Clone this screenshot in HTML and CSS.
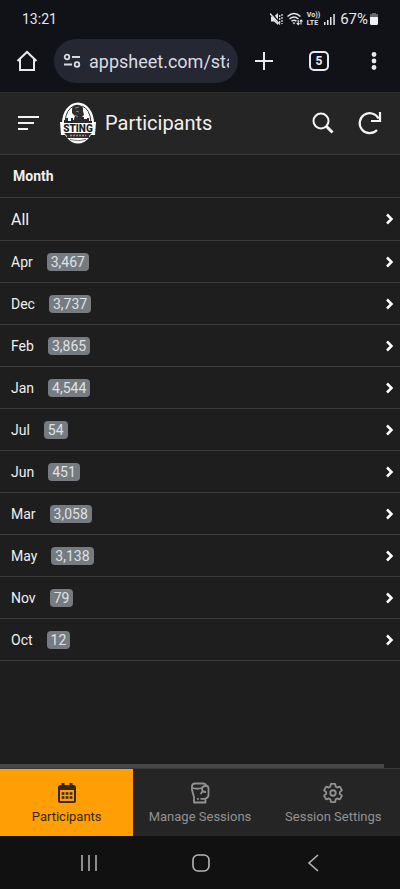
FILE: index.html
```html
<!DOCTYPE html>
<html lang="en">
<head>
    <meta charset="UTF-8">
    <meta name="viewport" content="width=device-width, initial-scale=1.0">
    <title>Participants</title>
    <link rel="stylesheet" href="styles.css">
</head>
<body>
    <div class="status-bar">
        <span class="clock">13:21</span>
        <div class="status-icons">
            <svg width="13" height="14" viewBox="0 0 13 14">
                <path d="M1 4.500h3L8 1v12L4 9.500H1z" fill="#e4e5e8"/>
                <path d="M1 1l10 12" stroke="#111217" stroke-width="2.500"/>
                <path d="M0 1.500l10 11" stroke="#e4e5e8" stroke-width="1.200"/>
                <path d="M9.700 3v8M12 2v10" stroke="#e4e5e8" stroke-width="1.200" stroke-dasharray="2 1"/>
            </svg>
            <svg width="16" height="14" viewBox="0 0 16 14" fill="none" stroke="#e4e5e8" stroke-width="1.500">
                <path d="M.5 4.500q6.500-6 13 0M2.500 7q4.500-4 9 0M4.500 9.300q2.500-2.200 5 0"/>
                <path d="M5.500 10.500h3L7 12.500z" fill="#e4e5e8" stroke="none"/>
                <path d="M11.200 8v4.500M14 12.500V8M9.700 11l1.500 1.700 1.300-1.500M12.700 9.500L14 8l1.500 1.500" stroke-width="1.100"/>
            </svg>
            <span class="volte"><span>Vo))</span><span>LTE</span></span>
            <svg width="12" height="12" viewBox="0 0 12 12" fill="#e4e5e8">
                <path d="M0 9h1.500v3H0zM3 7h1.500v5H3zM6 4h1.500v8H6zM9.300 1h1.500v11H9.300z"/>
            </svg>
            <span class="battery">
                <span>67%</span>
                <svg width="8" height="12" viewBox="0 0 8 12">
                    <path d="M2 0h4v1h1.500l.5.500V4H0V1.500L.5 1H2z" fill="#66676c"/>
                    <path d="M0 4h8v6.500Q8 12 6.500 12h-5Q0 12 0 10.500z" fill="#f1f1f3"/>
                </svg>
            </span>
        </div>
    </div>

    <div class="browser-bar">
        <button class="icon-btn" aria-label="Home">
            <svg width="22" height="22" viewBox="0 0 22 22" fill="none" stroke="#e8e9ed" stroke-width="2">
                <path d="M1.500 11L11 2l9.500 9M4 9v11h14V9"/>
            </svg>
        </button>
        <div class="address">
            <svg width="18" height="16" viewBox="0 0 18 16" fill="none" stroke="#d9dbe2" stroke-width="1.800">
                <circle cx="4" cy="4" r="2.300"/><path d="M9 4h8M1 11.500h8"/><circle cx="14" cy="11.500" r="2.300"/>
            </svg>
            <input class="url" type="text" value="appsheet.com/start" aria-label="Address">
        </div>
        <div class="browser-actions">
            <button class="icon-btn" aria-label="New tab">
                <svg width="20" height="20" viewBox="0 0 20 20" stroke="#e8e9ed" stroke-width="2"><path d="M1 10h18M10 1v18"/></svg>
            </button>
            <button class="icon-btn tabs" aria-label="Open tabs">5</button>
            <button class="icon-btn" aria-label="Menu">
                <svg width="20" height="20" viewBox="0 0 20 20" fill="#e8e9ed"><circle cx="10" cy="3.500" r="2.400"/><circle cx="10" cy="10" r="2.400"/><circle cx="10" cy="16.500" r="2.400"/></svg>
            </button>
        </div>
    </div>

    <header class="app-bar">
        <button class="icon-btn" aria-label="Open navigation">
            <svg width="22" height="18" viewBox="0 0 22 18" stroke="#f2f2f2" stroke-width="2.200"><path d="M0 3h21M0 9h16M0 15h10"/></svg>
        </button>
        <svg class="logo" width="38" height="42" viewBox="0 0 38 42">
            <ellipse cx="19" cy="21" rx="16" ry="20.500" fill="#fff"/>
            <path d="M1 20h36l-1 13H2z" fill="#fff"/>
            <path d="M6 20Q7 7 15 4M32 20Q31 7 23 4" fill="none" stroke="#333" stroke-width="1"/>
            <path d="M13 7q1-5 7-4 5 1 4 6l1 4-2 2v5h-9l2-6-3-3z" fill="#2b2c2e"/>
            <path d="M16 6l4-1M17 9l3 1M16 13l3 2" stroke="#8a8a8a" stroke-width="1"/>
            <path d="M5 21v-3h2v-2h2v3h3v-3h2v2h9v-3h2v2h3v-1h2v3h3v2z" fill="#292a2c"/>
            <text x="19" y="30" text-anchor="middle" class="logo-name">STING</text>
            <path d="M5 31h28l-3 3 1 2H7l1-2z" fill="#342b2d"/>
            <path d="M11 33.500h16" stroke="#a88888" stroke-width="1.500" stroke-dasharray="2 1"/>
            <path d="M11 37.500q8 2.500 16 0" fill="none" stroke="#777" stroke-width="1"/>
        </svg>
        <h1>Participants</h1>
        <div class="app-actions">
            <button class="icon-btn" aria-label="Search">
                <svg width="22" height="22" viewBox="0 0 22 22" fill="none" stroke="#f4f4f4"><circle cx="9" cy="9" r="7.500" stroke-width="2"/><path d="M14.500 14.500l6 6" stroke-width="3"/></svg>
            </button>
            <button class="icon-btn" aria-label="Refresh">
                <svg width="24" height="24" viewBox="0 0 24 24" fill="none" stroke="#f4f4f4" stroke-width="2.200"><path d="M19 19A10 10 0 1 1 20.500 7.500M22 1v9h-9"/></svg>
            </button>
        </div>
    </header>

    <main class="content">
        <h2>Month</h2>
        <ul class="months" id="months">
            <li><a href="#all" class="all"><span>All</span></a></li>
        </ul>
    </main>

    <div class="scroll-track"><div class="scroll-thumb"></div></div>

    <nav class="tab-bar">
        <a href="#participants" class="tab active">
            <svg width="20" height="22" viewBox="0 0 20 22">
                <rect x="2" y="4" width="16" height="16" rx="1.500" fill="none" stroke="currentColor" stroke-width="2"/>
                <path d="M2 4h16v4H2zM4.500 1h3v4h-3zM12.500 1h3v4h-3z" fill="currentColor"/>
                <path d="M4.700 11.500h11M4.700 15.500h11" stroke="currentColor" stroke-width="2.500" stroke-dasharray="2.700 1.300"/>
            </svg>
            <span>Participants</span>
        </a>
        <a href="#manage" class="tab">
            <svg width="20" height="22" viewBox="0 0 20 22" fill="none" stroke="currentColor" stroke-width="1.800" stroke-linejoin="round">
                <path d="M4 20.500V15L2 8V4.500q0-3 3-3h8q2.500 0 3 2 2.500.5 2.500 3V13q0 2.500-3 3.500v4z"/>
                <path d="M2.500 6q5 1.500 9 0M16 4q-4 0-4 3t4 3M12.500 9.500L10.500 12M7 16.800h1.800M10.500 16.800h5"/>
            </svg>
            <span>Manage Sessions</span>
        </a>
        <a href="#settings" class="tab">
            <svg width="20" height="22" viewBox="1 0 22 24" fill="none" stroke="currentColor" stroke-width="2" stroke-linejoin="round">
                <path d="M19.430 12.980c.04-.32.07-.64.07-.98 0-.34-.03-.66-.07-.98l2.110-1.650c.19-.15.24-.42.12-.64l-2-3.460c-.09-.16-.26-.25-.44-.25l-.17.03-2.490 1c-.52-.4-1.080-.73-1.690-.98l-.38-2.650C14.460 2.180 14.250 2 14 2h-4c-.25 0-.46.18-.49.42l-.38 2.650c-.61.25-1.170.59-1.690.98l-2.490-1-.18-.03c-.17 0-.34.09-.43.25l-2 3.460c-.13.22-.07.49.12.64l2.110 1.650c-.04.32-.07.65-.07.98 0 .33.03.66.07.98l-2.110 1.650c-.19.15-.24.42-.12.64l2 3.460c.09.16.26.25.44.25l.17-.03 2.490-1c.52.4 1.080.73 1.690.98l.38 2.650c.03.24.24.42.49.42h4c.25 0 .46-.18.49-.42l.38-2.650c.61-.25 1.170-.59 1.690-.98l2.490 1 .18.03c.17 0 .34-.09.43-.25l2-3.460c.12-.22.07-.49-.12-.64z"/>
                <circle cx="12" cy="12" r="3"/>
            </svg>
            <span>Session Settings</span>
        </a>
    </nav>

    <div class="system-nav">
        <button class="icon-btn" aria-label="Recent apps">
            <svg width="18" height="18" viewBox="0 0 18 18" stroke="#b5b5b5" stroke-width="1.500"><path d="M2 1v16M9 1v16M16 1v16"/></svg>
        </button>
        <button class="icon-btn" aria-label="Home screen">
            <svg width="18" height="18" viewBox="0 0 18 18" fill="none" stroke="#b5b5b5" stroke-width="1.600"><rect x="1" y="1" width="16" height="16" rx="5"/></svg>
        </button>
        <button class="icon-btn" aria-label="Back">
            <svg width="18" height="18" viewBox="0 0 18 18" fill="none" stroke="#b5b5b5" stroke-width="1.600"><path d="M14 1L5 9l9 8"/></svg>
        </button>
    </div>

    <script src="script.js"></script>
</body>
</html>
```
FILE: styles.css
```css
* {
    margin: 0;
    padding: 0;
    box-sizing: border-box;
}

body {
    font-family: Roboto, 'Liberation Sans', sans-serif;
    background: #1e1e1e;
    color: #f0f0f0;
    min-height: 100vh;
    display: flex;
    flex-direction: column;
}

svg {
    display: block;
    flex-shrink: 0;
}

a {
    color: inherit;
    text-decoration: none;
}

.icon-btn {
    display: flex;
    align-items: center;
    justify-content: center;
    background: none;
    border: none;
    color: #e8e9ed;
    font-family: inherit;
    cursor: pointer;
}

.status-bar {
    display: flex;
    align-items: center;
    justify-content: space-between;
    height: 38px;
    padding: 0 22px;
    background: #111217;
    color: #e4e5e8;
    font-size: 14px;
}

.status-icons {
    display: flex;
    align-items: center;
    gap: 4px;
}

.volte {
    display: flex;
    flex-direction: column;
    font-size: 7px;
    line-height: 8px;
    font-weight: 700;
}

.battery {
    display: flex;
    align-items: center;
    gap: 2px;
    font-size: 15px;
}

.browser-bar {
    display: flex;
    align-items: center;
    gap: 16px;
    height: 54px;
    padding: 0 16px 8px;
    background: #111217;
}

.address {
    flex: 1;
    min-width: 0;
    display: flex;
    align-items: center;
    gap: 8px;
    height: 44px;
    padding: 0 9px;
    border-radius: 22px;
    background: #252732;
}

.url {
    flex: 1;
    min-width: 0;
    background: none;
    border: none;
    outline: none;
    color: #d9dbe2;
    font-family: inherit;
    font-size: 18px;
}

.browser-actions {
    display: flex;
    align-items: center;
    gap: 35px;
}

.tabs {
    width: 20px;
    height: 20px;
    border: 2px solid #e8e9ed;
    border-radius: 5px;
    font-size: 12px;
    font-weight: 700;
}

.app-bar {
    display: flex;
    align-items: center;
    height: 63px;
    padding: 0 18px 2px;
    background: #252525;
    border-top: 1px solid #303030;
    border-bottom: 1px solid #3a3a3a;
}

.logo {
    margin: 0 8px 0 19px;
}

.logo-name {
    font-size: 10px;
    font-weight: 900;
    fill: #1d1d1f;
}

h1 {
    font-size: 20px;
    font-weight: 400;
}

.app-actions {
    display: flex;
    align-items: center;
    gap: 24px;
    margin-left: auto;
}

.content {
    flex: 1;
}

h2 {
    padding: 0 13px;
    border-bottom: 1px solid #3a3a3a;
    font-size: 14px;
    line-height: 42px;
    font-weight: 700;
}

.months {
    list-style: none;
}

.months a {
    display: flex;
    align-items: center;
    gap: 14px;
    height: 42px;
    padding: 0 6px 0 11px;
    border-bottom: 1px solid #3a3a3a;
    font-size: 14px;
}

.months .all {
    height: 43px;
    font-size: 16px;
}

.count {
    padding: 0 4px;
    border-radius: 4px;
    background: #757b80;
    color: #dfe2e5;
    line-height: 18px;
}

.chevron {
    margin-left: auto;
}

.scroll-track {
    height: 5px;
    border-bottom: 1px solid #3a3a3a;
}

.scroll-thumb {
    width: 96%;
    height: 4px;
    background: #484848;
}

.tab-bar {
    display: grid;
    grid-template-columns: repeat(3, 1fr);
    height: 67px;
    background: #252525;
}

.tab {
    display: flex;
    flex-direction: column;
    align-items: center;
    justify-content: center;
    gap: 4px;
    padding-top: 3px;
    color: #929292;
    font-size: 13px;
    line-height: 18px;
    white-space: nowrap;
}

.tab.active {
    background: #ff9f05;
    color: #352710;
}

.system-nav {
    display: flex;
    align-items: center;
    justify-content: center;
    gap: 94px;
    height: 53px;
    padding: 1px 0 0 2px;
    background: #111;
}
```
FILE: script.js
```js
const months = [
    ['Apr', 3467], ['Dec', 3737], ['Feb', 3865], ['Jan', 4544], ['Jul', 54],
    ['Jun', 451], ['Mar', 3058], ['May', 3138], ['Nov', 79], ['Oct', 12]
];

const list = document.getElementById('months');

months.forEach(([name, count]) => {
    const item = document.createElement('li');
    item.innerHTML = `
        <a href="#${name.toLowerCase()}">
            <span>${name}</span>
            <span class="count">${count.toLocaleString('en-US')}</span>
        </a>
    `;
    list.appendChild(item);
});

// Every row ends with the same arrow
list.querySelectorAll('a').forEach(row => {
    row.insertAdjacentHTML('beforeend', `
        <svg class="chevron" width="9" height="12" viewBox="0 0 9 12" fill="none" stroke="#fff" stroke-width="2.5">
            <path d="M2 1.500L6.500 6 2 10.500"/>
        </svg>
    `);
});
```
